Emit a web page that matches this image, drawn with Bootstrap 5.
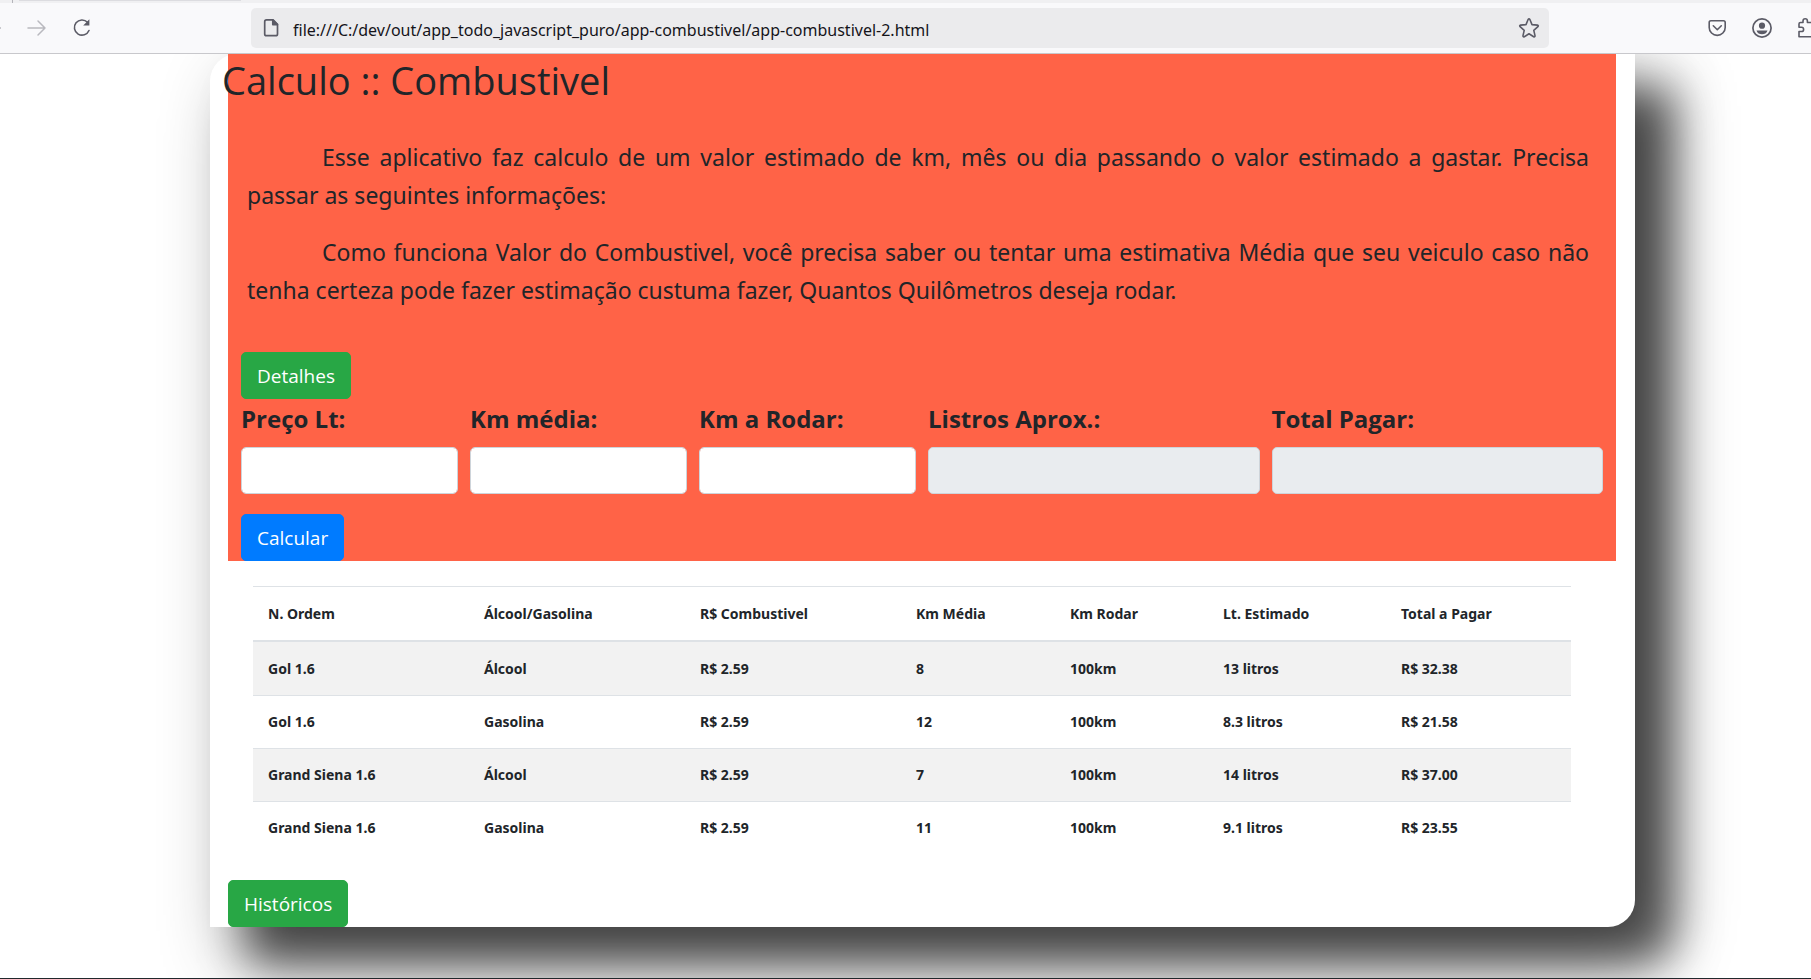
<!DOCTYPE html>
<html lang="pt-BR">
<head>
<meta charset="utf-8">
<meta name="viewport" content="width=device-width, initial-scale=1">
<title>Calculo :: Combustivel</title>
<link rel="stylesheet" href="https://cdn.jsdelivr.net/npm/bootstrap@5.3.0/dist/css/bootstrap.min.css">
<style>
  body { font-family: "Open Sans", "Noto Sans", sans-serif; color: #212529; background: #fff; overflow: hidden; }
  .app-shell { height: 100vh; }
  .tab-edge { height: 3px; background: #f0f0f2; padding-left: 12px; gap: 6px; }
  .tab-split { width: 1px; background: #b4b4ba; }
  .tab-foot { width: 222px; height: 1px; background: #dcdce0; }
  .tool-bar { height: 51px; background: #f9f9fb; border-bottom: 1px solid #c8c8cc; }
  .tool-btn { border: 0; padding: 0; background: none; color: #5b5b66; display: flex; }
  .nav-side { width: 251px; gap: 23px; }
  .nav-side .is-off { color: #b9b9bf; }
  .addr { background: #ebebed; border-radius: 5px; height: 40px; padding: 0 9px 0 10px; gap: 12px; }
  .addr input { font-family: "Noto Sans", sans-serif; border: 0; background: none; font-size: 16px; color: #15141a; padding: 4px 0 0; outline: 0; min-width: 0; }
  .tool-side { width: 262px; padding-left: 158px; gap: 22px; overflow: hidden; }
  .tool-side svg, .nav-side svg, .addr svg { flex: none; display: block; }
  .view-port { overflow: hidden; min-height: 0; padding-left: 34px; border-bottom: 1px solid #20282c; }
  .sheet { max-width: 1425px; margin: 0 auto; padding: 0 19px 0 18px; background: #fff; border-radius: 27px 0 27px 0;
    box-shadow: 38px 36px 44px rgba(0,0,0,.58), 26px 28px 72px rgba(0,0,0,.45); }
  .calc-area { background: #ff6347; padding: 0 13px; }
  .calc-area h1 { font-size: 38px; line-height: 48px; margin: 0 0 0 -19px; padding-top: 2px; font-weight: 400; }
  .intro { padding: 34px 14px 0 6px; margin-bottom: 43px; }
  .intro p { font-family: "Noto Sans", sans-serif; font-size: 23px; line-height: 38px; margin: 0 0 19px; text-indent: 75px; text-align: justify; }
  .btn { --bs-btn-font-size: 19px; --bs-btn-padding-x: 15px; --bs-btn-border-radius: 5px; height: 47px; line-height: 30px; }
  .btn-success { --bs-btn-bg: #28a745; --bs-btn-border-color: #28a745; }
  .btn-primary { --bs-btn-bg: #007bff; --bs-btn-border-color: #007bff; }
  .calc-row { --bs-gutter-x: 12px; margin-bottom: 20px; }
  .calc-row label { font-size: 24px; line-height: 40px; margin-bottom: 8px; font-weight: 700; display: block; }
  .calc-row .form-control { height: 47px; border: 1px solid #ced4da; border-radius: 5px; font-size: 19px; }
  .calc-row .form-control:disabled { background: #e9ecef; }
  .hist-wrap { padding: 25px 45px 26px 25px; }
  .hist { font-family: "Noto Sans", sans-serif; table-layout: fixed; margin: 0; font-size: 14px; line-height: 22px; font-weight: 700; color: #212529; border-color: #dee2e6; }
  .hist > :not(caption) > * > * { padding: 15px; border-width: 1px 0 0; box-shadow: none; color: #212529; font-weight: 700; white-space: nowrap; }
  .hist > thead > tr > th { border-bottom-width: 2px; padding-top: 16px; }
  .hist > tbody > tr:first-child > td { border-top-width: 0; padding-top: 16px; }
  .hist tbody tr:nth-child(odd) > * { background: #f2f2f2; }
  .w-a { width: 216px; } .w-b { width: 154px; } .w-c { width: 153px; } .w-d { width: 178px; }
</style>
</head>
<body>
<div class="app-shell d-flex flex-column">
  <header>
    <div class="tab-edge d-flex"><span class="tab-split"></span><span class="tab-foot"></span></div>
    <div class="tool-bar d-flex align-items-center">
      <nav class="nav-side d-flex align-items-center flex-shrink-0">
        <button class="tool-btn is-off" aria-label="Voltar"><svg width="3" height="22" viewBox="0 0 3 22" fill="none" stroke="currentColor" stroke-width="1.500"><path d="M0 11h1"/></svg></button>
        <button class="tool-btn is-off" aria-label="Avançar"><svg width="22" height="22" viewBox="0 0 22 22" fill="none" stroke="currentColor" stroke-width="1.500" stroke-linecap="round" stroke-linejoin="round"><path d="M2 11h17M12 4l7 7-7 7"/></svg></button>
        <button class="tool-btn" aria-label="Recarregar"><svg width="22" height="22" viewBox="0 0 22 22"><path d="M16.500 5.300A7.600 7.600 0 1 0 18 13.500" fill="none" stroke="currentColor" stroke-width="1.600" stroke-linecap="round"/><path d="M18.400 2.300v6.200h-6.200z" fill="currentColor"/></svg></button>
      </nav>
      <div class="addr d-flex align-items-center flex-grow-1">
        <svg width="20" height="20" viewBox="0 0 20 20" fill="none" stroke="#5b5b66" stroke-width="1.700" stroke-linejoin="round"><path d="M5.500 1.900h6.600l4.400 4.400v9.600a1.800 1.800 0 0 1-1.800 1.800H5.500a1.800 1.800 0 0 1-1.800-1.800V3.700a1.800 1.800 0 0 1 1.800-1.800z"/><path d="M11.800 2v4.600h4.600z" fill="#5b5b66"/></svg>
        <input class="flex-grow-1" type="text" aria-label="Endereço" value="file:///C:/dev/out/app_todo_javascript_puro/app-combustivel/app-combustivel-2.html">
        <button class="tool-btn" aria-label="Favoritar"><svg width="22" height="22" viewBox="0 0 22 22" fill="none" stroke="currentColor" stroke-width="1.600" stroke-linejoin="round"><path d="M10.100 2.500q.9-1.200 1.800 0l2.100 5.100 5.400.5q1.500.4.500 1.600l-4.100 3.600 1.200 5.400q.1 1.500-1.300 1L11 16.800l-4.700 2.900q-1.400.5-1.300-1l1.200-5.400-4.100-3.600q-1-1.200.5-1.600l5.400-.5z"/></svg></button>
      </div>
      <div class="tool-side d-flex align-items-center flex-shrink-0">
        <button class="tool-btn" aria-label="Pocket"><svg width="22" height="22" viewBox="0 0 22 22" fill="none" stroke="currentColor" stroke-width="1.600" stroke-linecap="round" stroke-linejoin="round"><path d="M4 3.700h12.500a1.700 1.700 0 0 1 1.700 1.700v5a8 8 0 0 1-16 0v-5A1.700 1.700 0 0 1 4 3.700z"/><path d="M6.300 8.800l4 3.900 4-3.900"/></svg></button>
        <button class="tool-btn" aria-label="Conta"><svg width="22" height="22" viewBox="0 0 22 22"><circle cx="11" cy="11" r="9.100" fill="none" stroke="currentColor" stroke-width="1.700"/><circle cx="11" cy="8.700" r="3.100" fill="currentColor"/><path d="M5.500 13.400h11c-.8 2.700-2.900 3.800-5.500 3.800s-4.700-1.100-5.500-3.800z" fill="currentColor"/></svg></button>
        <button class="tool-btn" aria-label="Extensões"><svg width="22" height="22" viewBox="0 0 22 22" fill="none" stroke="currentColor" stroke-width="1.600" stroke-linejoin="round"><path d="M8 5.500V4a2.200 2.200 0 0 1 4.400 0v1.500h4.600v14.300H4v-5.300h2.500a2.100 2.100 0 0 0 0-4.200H4V7a1.500 1.500 0 0 1 1.500-1.500z"/></svg></button>
      </div>
    </div>
  </header>
  <main class="view-port flex-grow-1">
    <div class="sheet">
      <section class="calc-area">
        <h1>Calculo :: Combustivel</h1>
        <div class="intro">
          <p>Esse aplicativo faz calculo de um valor estimado de km, mês ou dia passando o valor estimado a gastar. Precisa passar as seguintes informações:</p>
          <p>Como funciona Valor do Combustivel, você precisa saber ou tentar uma estimativa Média que seu veiculo caso não tenha certeza pode fazer estimação custuma fazer, Quantos Quilômetros deseja rodar.</p>
        </div>
        <button class="btn btn-success d-block" type="button">Detalhes</button>
        <form>
          <div class="row calc-row">
            <div class="col-2"><label for="preco">Preço Lt:</label><input class="form-control" id="preco"></div>
            <div class="col-2"><label for="media">Km média:</label><input class="form-control" id="media"></div>
            <div class="col-2"><label for="rodar">Km a Rodar:</label><input class="form-control" id="rodar"></div>
            <div class="col-3"><label for="litros">Listros Aprox.:</label><input class="form-control" id="litros" disabled></div>
            <div class="col-3"><label for="total">Total Pagar:</label><input class="form-control" id="total" disabled></div>
          </div>
          <button class="btn btn-primary d-block" type="button">Calcular</button>
        </form>
      </section>
      <div class="hist-wrap">
        <table class="table hist">
          <colgroup><col class="w-a"><col class="w-a"><col class="w-a"><col class="w-b"><col class="w-c"><col class="w-d"><col></colgroup>
          <thead><tr><th>N. Ordem</th><th>Álcool/Gasolina</th><th>R$ Combustivel</th><th>Km Média</th><th>Km Rodar</th><th>Lt. Estimado</th><th>Total a Pagar</th></tr></thead>
          <tbody>
            <tr><td>Gol 1.6</td><td>Álcool</td><td>R$ 2.59</td><td>8</td><td>100km</td><td>13 litros</td><td>R$ 32.38</td></tr>
            <tr><td>Gol 1.6</td><td>Gasolina</td><td>R$ 2.59</td><td>12</td><td>100km</td><td>8.3 litros</td><td>R$ 21.58</td></tr>
            <tr><td>Grand Siena 1.6</td><td>Álcool</td><td>R$ 2.59</td><td>7</td><td>100km</td><td>14 litros</td><td>R$ 37.00</td></tr>
            <tr><td>Grand Siena 1.6</td><td>Gasolina</td><td>R$ 2.59</td><td>11</td><td>100km</td><td>9.1 litros</td><td>R$ 23.55</td></tr>
          </tbody>
        </table>
      </div>
      <button class="btn btn-success d-block" type="button">Históricos</button>
    </div>
  </main>
</div>
<script src="https://cdn.jsdelivr.net/npm/bootstrap@5.3.0/dist/js/bootstrap.bundle.min.js"></script>
</body>
</html>
